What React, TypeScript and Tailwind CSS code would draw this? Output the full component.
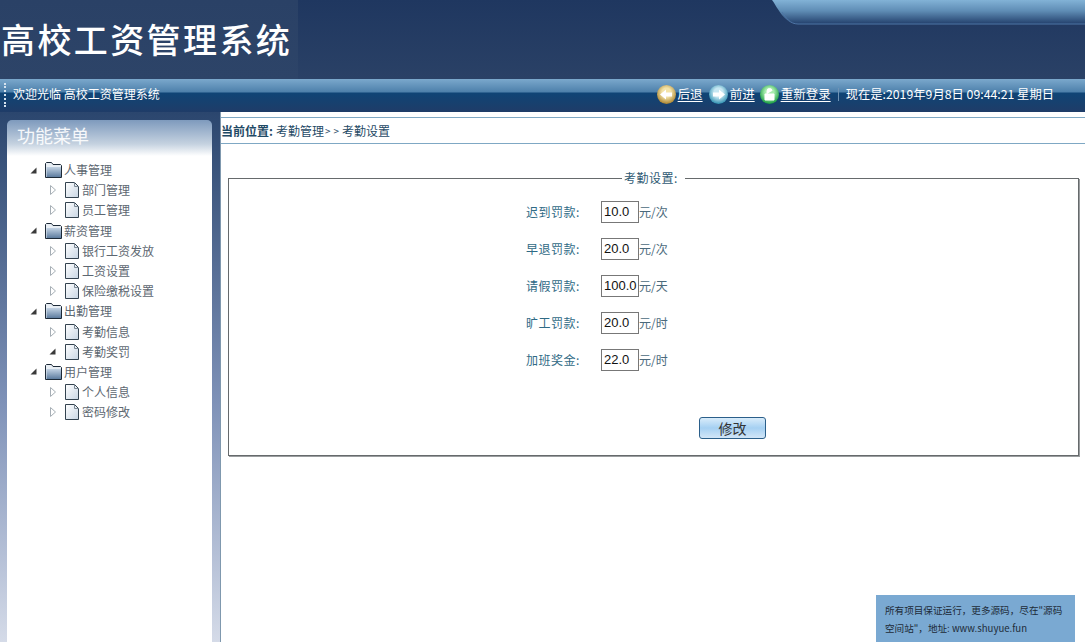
import { ReactNode } from "react";

const tree = [
  { name: "人事管理", children: ["部门管理", "员工管理"] },
  { name: "薪资管理", children: ["银行工资发放", "工资设置", "保险缴税设置"] },
  { name: "出勤管理", children: ["考勤信息", "考勤奖罚"] },
  { name: "用户管理", children: ["个人信息", "密码修改"] },
];

const fields = [
  { label: "迟到罚款:", value: "10.0", unit: "元/次" },
  { label: "早退罚款:", value: "20.0", unit: "元/次" },
  { label: "请假罚款:", value: "100.0", unit: "元/天" },
  { label: "旷工罚款:", value: "20.0", unit: "元/时" },
  { label: "加班奖金:", value: "22.0", unit: "元/时" },
];

function Folder() {
  return (
    <svg width="17" height="16" viewBox="0 0 17 16" className="shrink-0">
      <defs>
        <linearGradient id="fold" x1="0" y1="0" x2="0" y2="1">
          <stop offset="0" stopColor="#c3d3e4" />
          <stop offset="1" stopColor="#5d7c9f" />
        </linearGradient>
      </defs>
      <path d="M.5 15.5V1.5L1.5.5h5l1.500 2h7.500l1 1v12z" fill="#e8eef4" stroke="#1d2a38" />
      <path d="M1.500 15V5h14.500v10z" fill="url(#fold)" />
    </svg>
  );
}

function FileIcon() {
  return (
    <svg width="14" height="16" viewBox="0 0 14 16" className="shrink-0">
      <defs>
        <linearGradient id="page" x1="0" y1="0" x2="1" y2="1">
          <stop offset="0" stopColor="#ffffff" />
          <stop offset="1" stopColor="#c9d6e4" />
        </linearGradient>
      </defs>
      <path d="M.5.5h9l4 4v11H.5z" fill="url(#page)" stroke="#33424f" />
      <path d="M9.500.5v4h4" fill="none" stroke="#7b8894" />
    </svg>
  );
}

function Open() {
  return (
    <svg width="7" height="7" viewBox="0 0 7 7" className="shrink-0">
      <path d="M6.500 .5v6H.5z" fill="#3a3a3a" />
    </svg>
  );
}

function Closed() {
  return (
    <svg width="6" height="10" viewBox="0 0 6 10" className="shrink-0">
      <path d="M.5.5l5 4.500-5 4.500z" fill="#fff" stroke="#a6aeb5" />
    </svg>
  );
}

function NavIcon({ from, to, children }: { from: string; to: string; children: ReactNode }) {
  return (
    <svg width="19" height="19" viewBox="0 0 19 19" className="shrink-0">
      <defs>
        <radialGradient id={from} cx="0.5" cy="0.4" r="0.6">
          <stop offset="0.4" stopColor={from} />
          <stop offset="1" stopColor={to} />
        </radialGradient>
      </defs>
      <circle cx="9.500" cy="9.500" r="9.500" fill={`url(#${from})`} />
      {children}
    </svg>
  );
}

function NavLink({ label }: { label: string }) {
  return <span className="text-[12.5px] text-white underline underline-offset-2">{label}</span>;
}

export default function App() {
  return (
    <div className="h-[642px] w-[1085px] overflow-hidden flex flex-col bg-white font-['Noto_Sans_CJK_SC','Liberation_Sans',sans-serif]">
      <header className="relative h-[79px] shrink-0 bg-gradient-to-b from-[#1f3760] to-[#2a4166]">
        <div className="h-full w-[298px] bg-gradient-to-b from-[#2a4166] to-[#2d4468] flex items-center pl-[1px]">
          <span className="text-[34px] tracking-[2.4px] leading-none text-white font-medium mt-[-1px] whitespace-nowrap">高校工资管理系统</span>
        </div>
        <svg width="313" height="25" viewBox="0 0 313 25" className="absolute right-0 top-0" preserveAspectRatio="none">
          <defs>
            <linearGradient id="tab" x1="0" y1="0" x2="0" y2="1">
              <stop offset="0" stopColor="#82b2d6" />
              <stop offset="0.45" stopColor="#5f8db5" />
              <stop offset="1" stopColor="#23406c" />
            </linearGradient>
          </defs>
          <path d="M0 0c6 8 12 24 26 24h287V0z" fill="url(#tab)" />
          <path d="M10 12c4 6 8 12 16 12h287" fill="none" stroke="#4f76a6" />
        </svg>
      </header>

      <div className="h-[33px] shrink-0 relative flex items-center pl-[13px] pr-[31px] pb-[3px] bg-[linear-gradient(#7ba8cc_0,#4d80ab_13px,#0f4476_14px,#17406e_24px,#1f3c68_33px)]">
        <div className="absolute left-[4px] top-[4px] h-[24px] border-l-2 border-dotted border-[#d5e2ee]" />
        <span className="text-[12px] text-white whitespace-nowrap">欢迎光临 高校工资管理系统</span>
        <div className="ml-auto flex items-center text-[12.5px] text-white whitespace-nowrap">
          <NavIcon from="#f3e3a8" to="#a9822d">
            <path d="M3 9.500l6-5v3h6v4H9v3z" fill="#fff" />
          </NavIcon>
          <span className="ml-[2px]"><NavLink label="后退" /></span>
          <span className="ml-[6px]">
            <NavIcon from="#c7e7f2" to="#2d8fb0">
              <path d="M16 9.500l-6-5v3H4v4h6v3z" fill="#fff" />
            </NavIcon>
          </span>
          <span className="ml-[2px]"><NavLink label="前进" /></span>
          <span className="ml-[5px]">
            <NavIcon from="#a8ecae" to="#159a3e">
              <path d="M5 9h9v6H5zM7 9V6a2.500 2.500 0 015 0" fill="#fff" stroke="#fff" strokeWidth="1" />
            </NavIcon>
          </span>
          <span className="ml-[2px]"><NavLink label="重新登录" /></span>
          <span className="mx-[7px] h-[13px] border-l border-[#6f93b5]" />
          <span className="text-[12.3px]">现在是:2019年9月8日 09:44:21 星期日</span>
        </div>
      </div>

      <div className="flex-1 flex min-h-0">
        <aside className="w-[220px] shrink-0 pl-[7px] pr-[8px] pt-[8px] bg-gradient-to-b from-[#2b466e] via-[#7f92b8] via-55% to-[#d5dbe8]">
          <div className="h-full rounded-t-[5px] bg-[linear-gradient(#7e9abd_0,#c5d2e0_24px,#ffffff_36px)]">
            <div className="h-[40px] pl-[10px] pt-[2px] text-[18px] leading-[26px] text-white/90">功能菜单</div>
            <ul className="pl-[23px] text-[12px] text-[#5d6771]">
              {tree.map((group) => (
                <li key={group.name}>
                  <div className="h-[20.2px] flex items-center">
                    <Open />
                    <span className="ml-[8px]"><Folder /></span>
                    <span className="ml-[2px]">{group.name}</span>
                  </div>
                  {group.children.map((child) => (
                    <div key={child} className="h-[20.2px] flex items-center pl-[19px]">
                      <span className="w-[7px] flex justify-center">
                        {child === "考勤奖罚" ? <Open /> : <Closed />}
                      </span>
                      <span className="ml-[9px]"><FileIcon /></span>
                      <span className="ml-[3px]">{child}</span>
                    </div>
                  ))}
                </li>
              ))}
            </ul>
          </div>
        </aside>

        <main className="relative flex-1 min-w-0 bg-white border-l border-[#7f98ae]">
          <div className="mt-[5px] h-[27px] border-y border-[#7fa8c4] flex items-center text-[12px] text-[#1f4a66] whitespace-nowrap">
            <b className="font-bold">当前位置:</b>
            <span className="ml-[3px]">考勤管理</span>
            <span className="ml-[1px] text-[10px] tracking-[3px]">&gt;&gt;</span>
            <span>考勤设置</span>
          </div>
          <fieldset className="mt-[27px] ml-[7px] mr-[6px] h-[285px] border border-[#666a6c] shadow-[1px_1px_0_#9a9d9f] pt-[8px]">
            <legend className="mx-auto pl-[2px] pr-[7px] text-[12px] leading-[14px] tracking-[0.5px] text-[#2f5a73]">考勤设置:</legend>
            {fields.map((f) => (
              <div key={f.label} className="h-[37px] flex items-center pl-[297px] text-[12px] text-[#2f6a85]">
                <span className="w-[75px] tracking-[0.5px]">{f.label}</span>
                <input
                  readOnly
                  value={f.value}
                  className="w-[38px] h-[22px] border border-[#777] pl-[2px] text-[13px] text-[#111] font-['Liberation_Sans',sans-serif] outline-none"
                />
                <span className="text-[#4b6a7c]">{f.unit}</span>
              </div>
            ))}
            <div className="mt-[37px] pl-[470px]">
              <button className="w-[67px] h-[22px] rounded-[3px] border border-[#2b5f8a] bg-gradient-to-b from-[#d9ecfa] via-[#a5d0f2] to-[#d2e6f7] text-[14px] leading-none text-[#333]">修改</button>
            </div>
          </fieldset>
          <div className="absolute right-[10px] bottom-0 w-[199px] h-[47px] bg-[#7aa9d2] px-[9px] pt-[6px] text-[9.6px] leading-[18px] text-[#1d2b38] whitespace-nowrap">
            所有项目保证运行，更多源码，尽在"源码
            <br />
            空间站"，地址: www.shuyue.fun
          </div>
        </main>
      </div>
    </div>
  );
}
